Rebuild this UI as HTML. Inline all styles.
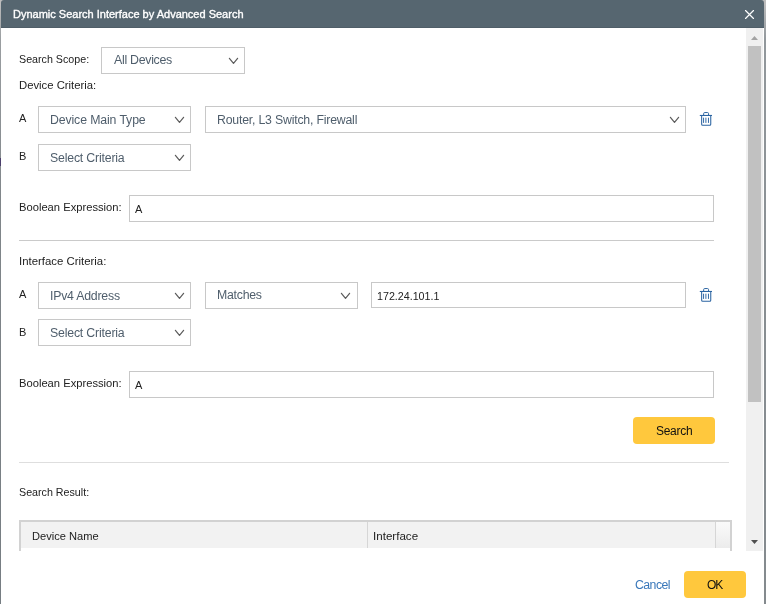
<!DOCTYPE html>
<html><head><meta charset="utf-8">
<style>
*{box-sizing:border-box;margin:0;padding:0}
html,body{width:766px;height:604px;overflow:hidden;background:#fff;font-family:"Liberation Sans",sans-serif;color:#333}
.a{position:absolute}
.t{position:absolute;line-height:0;white-space:nowrap;will-change:transform}
.b{position:absolute;border:1px solid #c8c8c8;background:#fff}
</style></head>
<body>
<div class="a" style="left:0;top:0;width:1px;height:604px;background:linear-gradient(#c0c0c0 0px,#9a9ea1 40px,#80868a 200px,#767d82 604px)"></div>
<div class="a" style="left:0;top:158px;width:1px;height:8px;background:#4b3f6c"></div>
<div class="a" style="left:764px;top:0;width:2px;height:604px;background:linear-gradient(#c0c0c0 0px,#92989c 40px,#888e92 300px,#848a8e 604px)"></div>
<div class="a" style="left:0;top:0;width:766px;height:5px;background:#bdbdbd"></div>
<div class="a" style="left:1px;top:0;width:763px;height:28px;background:#566670;border-radius:3px 3px 0 0;border-bottom:1px solid #4f5e68"></div>
<svg class="a" style="left:744px;top:9px" width="11" height="11" viewBox="0 0 11 11"><path d="M1.5 1.5L9.5 9.5M9.5 1.5L1.5 9.5" stroke="#fff" stroke-width="1.15" stroke-linecap="round"/></svg>
<div class="a" style="left:746px;top:28px;width:17px;height:523px;background:#f0f0f0"></div>
<div class="a" style="left:748px;top:46px;width:13px;height:356px;background:#c1c1c1"></div>
<svg class="a" style="left:750px;top:35px" width="9" height="6" viewBox="0 0 9 6"><path d="M1 5L4.5 1L8 5Z" fill="#a3a3a3"/></svg>
<svg class="a" style="left:750px;top:539px" width="9" height="6" viewBox="0 0 9 6"><path d="M1 1L4.5 5L8 1Z" fill="#505050"/></svg>
<div class="a" style="left:19px;top:240px;width:695px;height:1px;background:#cacaca"></div>
<div class="a" style="left:19px;top:462px;width:710px;height:1px;background:#dedede"></div>
<div class="a" style="left:633px;top:417px;width:82px;height:27px;background:#ffc83d;border-radius:4px"></div>
<div class="a" style="left:684px;top:571px;width:62px;height:27px;background:#ffc83d;border-radius:4px"></div>
<div class="a" style="left:19px;top:520px;width:713px;height:28px;background:#f2f2f2;border-top:2px solid #d2d2d2;border-left:2px solid #d2d2d2;border-right:2px solid #d2d2d2"></div>
<div class="a" style="left:730px;top:548px;width:2px;height:3px;background:#d2d2d2"></div>
<div class="a" style="left:19px;top:548px;width:2px;height:3px;background:#d2d2d2"></div>
<div class="a" style="left:367px;top:522px;width:1px;height:26px;background:#d6d6d6"></div>
<div class="a" style="left:715px;top:522px;width:1px;height:26px;background:#d6d6d6"></div>
<div class="a" style="left:716px;top:522px;width:14px;height:26px;background:linear-gradient(#fafafa,#ececec)"></div>

<div class="b" style="left:101px;top:47px;width:144px;height:27px"></div>
<svg class="a" style="left:228px;top:57px" width="12" height="8" viewBox="0 0 12 8"><path d="M1.4 1.3L5.5 6.4L9.6 1.3" fill="none" stroke="#5c5c5c" stroke-width="1.2" stroke-linecap="round" stroke-linejoin="round"/></svg>
<div class="b" style="left:38px;top:106px;width:153px;height:27px"></div>
<svg class="a" style="left:174px;top:116px" width="12" height="8" viewBox="0 0 12 8"><path d="M1.4 1.3L5.5 6.4L9.6 1.3" fill="none" stroke="#5c5c5c" stroke-width="1.2" stroke-linecap="round" stroke-linejoin="round"/></svg>
<div class="b" style="left:205px;top:106px;width:481px;height:27px"></div>
<svg class="a" style="left:669px;top:116px" width="12" height="8" viewBox="0 0 12 8"><path d="M1.4 1.3L5.5 6.4L9.6 1.3" fill="none" stroke="#5c5c5c" stroke-width="1.2" stroke-linecap="round" stroke-linejoin="round"/></svg>
<div class="b" style="left:38px;top:144px;width:153px;height:27px"></div>
<svg class="a" style="left:174px;top:154px" width="12" height="8" viewBox="0 0 12 8"><path d="M1.4 1.3L5.5 6.4L9.6 1.3" fill="none" stroke="#5c5c5c" stroke-width="1.2" stroke-linecap="round" stroke-linejoin="round"/></svg>
<div class="b" style="left:38px;top:282px;width:153px;height:27px"></div>
<svg class="a" style="left:174px;top:292px" width="12" height="8" viewBox="0 0 12 8"><path d="M1.4 1.3L5.5 6.4L9.6 1.3" fill="none" stroke="#5c5c5c" stroke-width="1.2" stroke-linecap="round" stroke-linejoin="round"/></svg>
<div class="b" style="left:205px;top:282px;width:153px;height:27px"></div>
<svg class="a" style="left:340px;top:292px" width="12" height="8" viewBox="0 0 12 8"><path d="M1.4 1.3L5.5 6.4L9.6 1.3" fill="none" stroke="#5c5c5c" stroke-width="1.2" stroke-linecap="round" stroke-linejoin="round"/></svg>
<div class="b" style="left:38px;top:319px;width:153px;height:27px"></div>
<svg class="a" style="left:174px;top:329px" width="12" height="8" viewBox="0 0 12 8"><path d="M1.4 1.3L5.5 6.4L9.6 1.3" fill="none" stroke="#5c5c5c" stroke-width="1.2" stroke-linecap="round" stroke-linejoin="round"/></svg>
<div class="b" style="left:129px;top:195px;width:585px;height:27px"></div>
<div class="b" style="left:371px;top:282px;width:315px;height:26px"></div>
<div class="b" style="left:129px;top:371px;width:585px;height:27px"></div>
<svg class="a" style="left:696px;top:108px" width="20" height="22" viewBox="0 0 20 22"><g fill="none" stroke="#2b64a2"><path d="M7.65 7.5V5.6Q7.65 4.55 8.7 4.55H11.5Q12.55 4.55 12.55 5.6V7.5" stroke-width="1"/><path d="M3.8 7.47H16" stroke-width="1.1"/><path d="M5.65 7.5V16.3Q5.65 17.3 6.65 17.3H13.75Q14.75 17.3 14.75 16.3V7.5" stroke-width="1.05"/><path d="M7.56 9.7V14.9M9.9 9.7V14.9M12.48 9.7V14.9" stroke-width="0.95"/></g></svg>
<svg class="a" style="left:696px;top:284px" width="20" height="22" viewBox="0 0 20 22"><g fill="none" stroke="#2b64a2"><path d="M7.65 7.5V5.6Q7.65 4.55 8.7 4.55H11.5Q12.55 4.55 12.55 5.6V7.5" stroke-width="1"/><path d="M3.8 7.47H16" stroke-width="1.1"/><path d="M5.65 7.5V16.3Q5.65 17.3 6.65 17.3H13.75Q14.75 17.3 14.75 16.3V7.5" stroke-width="1.05"/><path d="M7.56 9.7V14.9M9.9 9.7V14.9M12.48 9.7V14.9" stroke-width="0.95"/></g></svg>
<div class="t" style="left:13px;top:14px;font-size:11px;color:#fff;font-weight:normal;-webkit-text-stroke:0.35px #fff">Dynamic Search Interface by Advanced Search</div>
<div class="t" style="left:19px;top:59px;font-size:10.7px;color:#222;">Search Scope:</div>
<div class="t" style="left:114px;top:60px;font-size:12.4px;color:#4f5e6c;letter-spacing:-0.3px">All Devices</div>
<div class="t" style="left:19px;top:85px;font-size:11.3px;color:#222;">Device Criteria:</div>
<div class="t" style="left:19px;top:118px;font-size:11px;color:#222;">A</div>
<div class="t" style="left:50px;top:120px;font-size:12.3px;color:#4f5e6c;letter-spacing:-0.12px">Device Main Type</div>
<div class="t" style="left:217px;top:120px;font-size:12.3px;color:#4f5e6c;letter-spacing:-0.2px">Router, L3 Switch, Firewall</div>
<div class="t" style="left:19px;top:156px;font-size:11px;color:#222;">B</div>
<div class="t" style="left:50px;top:158px;font-size:12.3px;color:#4f5e6c;letter-spacing:-0.18px">Select Criteria</div>
<div class="t" style="left:19px;top:207px;font-size:11.2px;color:#222;">Boolean Expression:</div>
<div class="t" style="left:135px;top:209px;font-size:11px;color:#222;">A</div>
<div class="t" style="left:19px;top:261px;font-size:11.4px;color:#222;">Interface Criteria:</div>
<div class="t" style="left:19px;top:294px;font-size:11px;color:#222;">A</div>
<div class="t" style="left:50px;top:296px;font-size:12.3px;color:#4f5e6c;letter-spacing:-0.22px">IPv4 Address</div>
<div class="t" style="left:217px;top:295px;font-size:12.3px;color:#4f5e6c;letter-spacing:-0.25px">Matches</div>
<div class="t" style="left:377px;top:296px;font-size:10.7px;color:#222;">172.24.101.1</div>
<div class="t" style="left:19px;top:332px;font-size:11px;color:#222;">B</div>
<div class="t" style="left:50px;top:333px;font-size:12.3px;color:#4f5e6c;letter-spacing:-0.18px">Select Criteria</div>
<div class="t" style="left:19px;top:383px;font-size:11.2px;color:#222;">Boolean Expression:</div>
<div class="t" style="left:135px;top:385px;font-size:11px;color:#222;">A</div>
<div class="t" style="left:656px;top:431px;font-size:12px;color:#111;letter-spacing:-0.28px">Search</div>
<div class="t" style="left:19px;top:492px;font-size:10.7px;color:#222;">Search Result:</div>
<div class="t" style="left:32px;top:536px;font-size:11.1px;color:#222;">Device Name</div>
<div class="t" style="left:373px;top:536px;font-size:11.6px;color:#222;">Interface</div>
<div class="t" style="left:635px;top:585px;font-size:12.3px;color:#3a78ba;letter-spacing:-0.55px">Cancel</div>
<div class="t" style="left:707px;top:585px;font-size:12px;color:#111;letter-spacing:-1px">OK</div>
</body></html>
